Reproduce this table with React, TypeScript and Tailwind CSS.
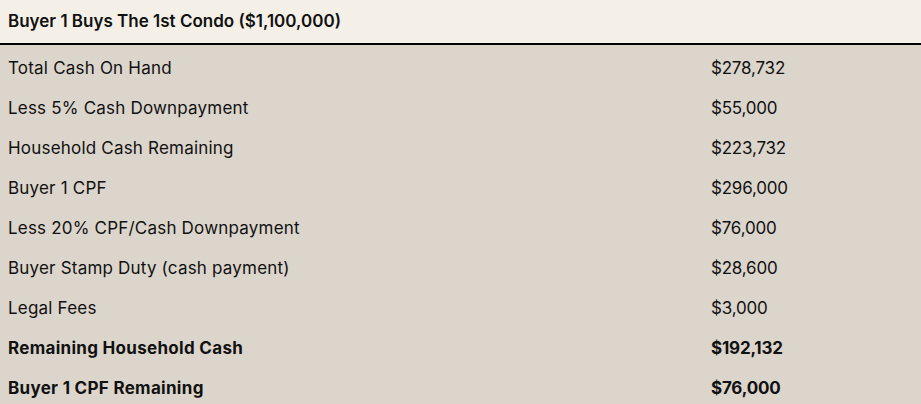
const rows: { label: string; value: string; bold?: boolean }[] = [
  { label: 'Total Cash On Hand', value: '$278,732' },
  { label: 'Less 5% Cash Downpayment', value: '$55,000' },
  { label: 'Household Cash Remaining', value: '$223,732' },
  { label: 'Buyer 1 CPF', value: '$296,000' },
  { label: 'Less 20% CPF/Cash Downpayment', value: '$76,000' },
  { label: 'Buyer Stamp Duty (cash payment)', value: '$28,600' },
  { label: 'Legal Fees', value: '$3,000' },
  { label: 'Remaining Household Cash', value: '$192,132', bold: true },
  { label: 'Buyer 1 CPF Remaining', value: '$76,000', bold: true },
];

export default function App() {
  return (
    <div className="w-[921px] h-[404px] overflow-hidden bg-[#dcd5cc] font-['Inter',sans-serif] text-[#111]">
      <div className="h-[45px] bg-[#f4f0e7] border-b-2 border-black flex items-center px-2 text-[17px] font-semibold">
        Buyer 1 Buys The 1st Condo ($1,100,000)
      </div>
      <div className="pt-[4px]">
        {rows.map((r) => (
          <div key={r.label} className={`h-10 flex items-center text-[17px] ${r.bold ? 'font-bold' : 'font-normal'}`}>
            <div className={`pl-2 w-[711px] ${r.bold ? 'tracking-[0.3px]' : 'tracking-[0.2px]'}`}>{r.label}</div>
            <div className="tracking-[-0.2px]">{r.value}</div>
          </div>
        ))}
      </div>
    </div>
  );
}
